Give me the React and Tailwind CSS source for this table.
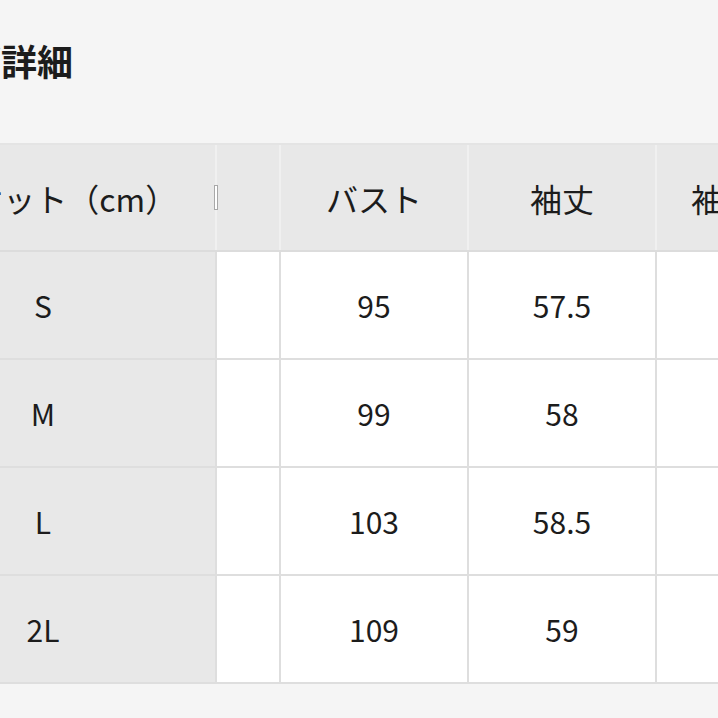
import React from "react";

const rows = [
  { size: "S", bust: "95", sleeve: "57.5", cuff: "13" },
  { size: "M", bust: "99", sleeve: "58", cuff: "13" },
  { size: "L", bust: "103", sleeve: "58.5", cuff: "14" },
  { size: "2L", bust: "109", sleeve: "59", cuff: "14" },
];

const cols = "grid grid-cols-[344px_62px_186px_186px_164px] gap-x-[2px]";

export default function App() {
  return (
    <div
      className="w-[718px] h-[718px] overflow-hidden bg-[#f5f5f5] text-[#1c1c1c]"
      style={{ fontFamily: '"Noto Sans CJK JP", "Noto Sans", sans-serif' }}
    >
      {/* Title */}
      <div className="h-[143px] pt-[42px]">
        <h2 className="ml-[-106px] whitespace-nowrap text-[36px] font-bold leading-none">
          サイズ詳細
        </h2>
      </div>

      <div className="ml-[-129px] w-[950px] border-t-2 border-[#e4e4e4]">
        {/* Header */}
        <div className={`${cols} bg-[#f0f0f0] border-b-2 border-[#dcdcdc]`}>
          <div className="relative h-[105px] bg-[#e8e8e8] flex items-center justify-center text-[32px] whitespace-nowrap">
            ジャケット（cm）
            <span className="absolute right-[-3px] top-[40px] h-[25px] w-[4px] border border-[#a8a8a8] bg-white"></span>
          </div>
          <div className="h-[105px] bg-[#e8e8e8]"></div>
          <div className="h-[105px] bg-[#e8e8e8] flex items-center justify-center text-[32px]">
            バスト
          </div>
          <div className="h-[105px] bg-[#e8e8e8] flex items-center justify-center text-[32px]">
            袖丈
          </div>
          <div className="h-[105px] bg-[#e8e8e8] flex items-center justify-center text-[32px] whitespace-nowrap">
            袖口幅
          </div>
        </div>

        {/* Body */}
        <div className={`${cols} gap-y-[2px] bg-[#dedede] border-b-2 border-[#dedede]`}>
          {rows.map((r) => (
            <React.Fragment key={r.size}>
              <div className="h-[106px] bg-[#e8e8e8] flex items-center justify-center text-[30px]">
                {r.size}
              </div>
              <div className="h-[106px] bg-white"></div>
              <div className="h-[106px] bg-white flex items-center justify-center text-[30px]">
                {r.bust}
              </div>
              <div className="h-[106px] bg-white flex items-center justify-center text-[30px]">
                {r.sleeve}
              </div>
              <div className="h-[106px] bg-white flex items-center justify-center text-[30px]">
                {r.cuff}
              </div>
            </React.Fragment>
          ))}
        </div>
      </div>
    </div>
  );
}
